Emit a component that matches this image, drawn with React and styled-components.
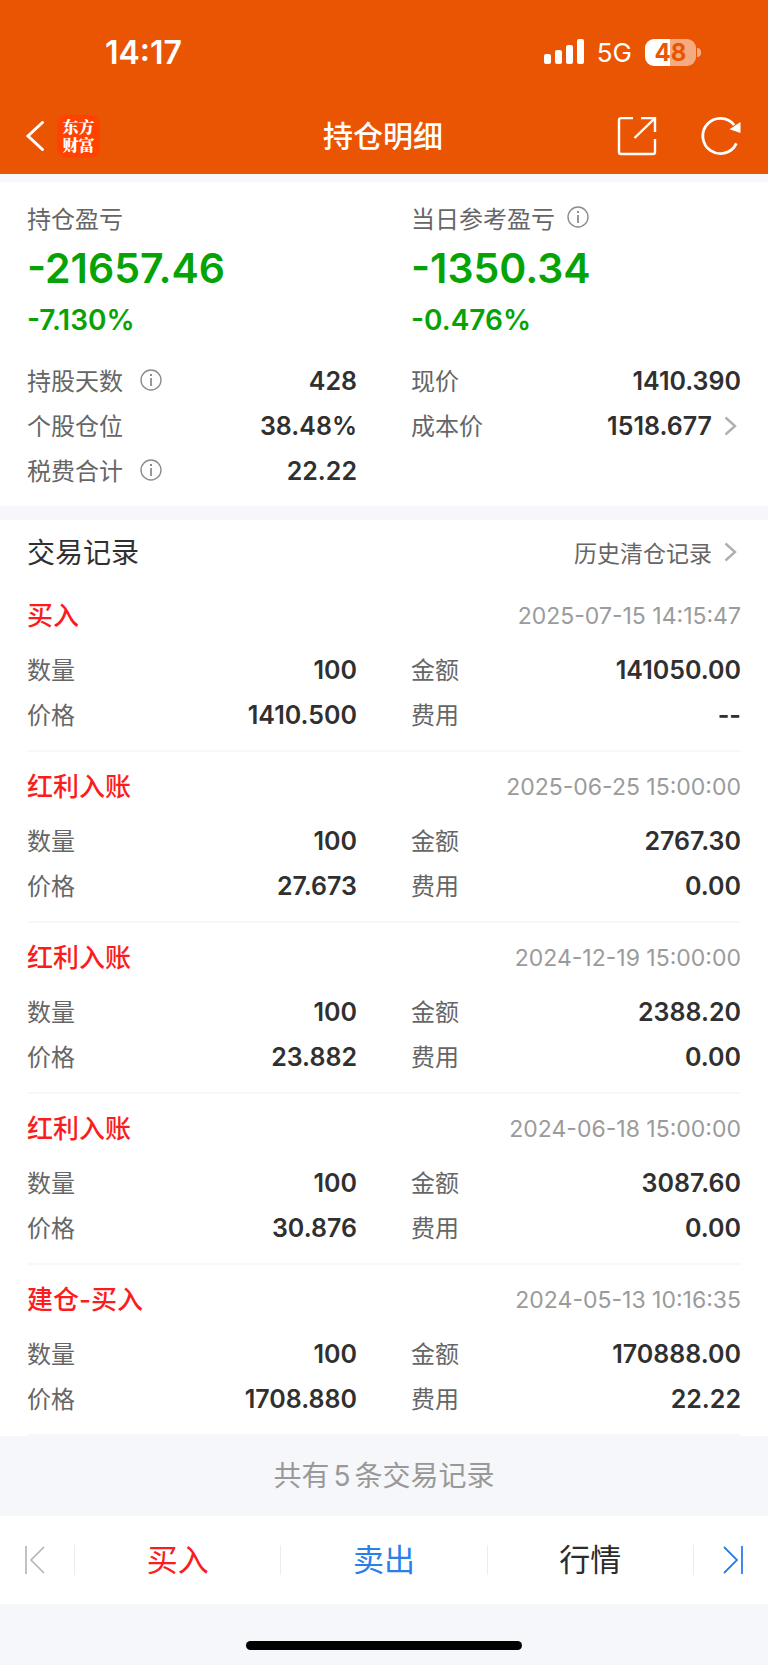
import React from 'react'
import styled, { createGlobalStyle } from 'styled-components'

const orange = '#ea5504'
const red = '#fb1d1d'
const green = '#05a305'
const blue = '#2b7fe8'
const page = '#f6f7fa'

const records = [
  {
    title: '买入',
    time: '2025-07-15 14:15:47',
    count: '100',
    amount: '141050.00',
    price: '1410.500',
    fee: '--',
  },
  {
    title: '红利入账',
    time: '2025-06-25 15:00:00',
    count: '100',
    amount: '2767.30',
    price: '27.673',
    fee: '0.00',
  },
  {
    title: '红利入账',
    time: '2024-12-19 15:00:00',
    count: '100',
    amount: '2388.20',
    price: '23.882',
    fee: '0.00',
  },
  {
    title: '红利入账',
    time: '2024-06-18 15:00:00',
    count: '100',
    amount: '3087.60',
    price: '30.876',
    fee: '0.00',
  },
  {
    title: '建仓-买入',
    time: '2024-05-13 10:16:35',
    count: '100',
    amount: '170888.00',
    price: '1708.880',
    fee: '22.22',
  },
]

const BackIcon = () => (
  <svg width="20" height="32" viewBox="0 0 20 32" fill="none">
    <path d="M17.5 2.5L3 16l14.5 13.5" stroke="#fff" strokeWidth="3" strokeLinecap="round" />
  </svg>
)

const ShareIcon = () => (
  <svg width="40" height="40" viewBox="0 0 40 40" fill="none" stroke="#fff" strokeWidth="2.4">
    <path d="M16 2.1H4a2 2 0 0 0-2 2V36a2 2 0 0 0 2 2h32a2 2 0 0 0 2-2V23" />
    <path d="M24 2.1h14v13.8M37.5 2.6L17.5 22" />
  </svg>
)

const RefreshIcon = () => (
  <svg width="40" height="40" viewBox="0 0 40 40" fill="none">
    <path d="M35.4 27.4A17.6 17.6 0 1 1 33.2 9" stroke="#fff" strokeWidth="2.8" />
    <path d="M28.5 13.2L39.5 6v11z" fill="#fff" />
  </svg>
)

const SignalIcon = () => (
  <svg width="40" height="26" viewBox="0 0 40 26" fill="#fff">
    <rect x="0" y="15" width="7" height="10" rx="2" />
    <rect x="11" y="11" width="7" height="14" rx="2" />
    <rect x="22" y="6" width="7" height="19" rx="2" />
    <rect x="33" y="0" width="7" height="25" rx="2" />
  </svg>
)

const InfoIcon = () => (
  <svg width="22" height="22" viewBox="0 0 22 22" fill="none" stroke="#8c8c8c">
    <circle cx="11" cy="11" r="10" strokeWidth="1.4" />
    <path d="M11 9v8" strokeWidth="1.8" />
    <path d="M11 5v2" strokeWidth="2" />
  </svg>
)

const ChevronIcon = () => (
  <svg width="14" height="20" viewBox="0 0 14 20" fill="none">
    <path d="M1.5 1.5L11 10l-9.5 8.5" stroke="#b0b0b0" strokeWidth="2.4" />
  </svg>
)

const FirstIcon = () => (
  <svg width="20" height="28" viewBox="0 0 20 28" fill="none" stroke="#b3b3b3" strokeWidth="1.6">
    <path d="M1 0v28M19 1L6 14l13 13" />
  </svg>
)

const LastIcon = () => (
  <svg width="20" height="28" viewBox="0 0 20 28" fill="none" stroke={blue} strokeWidth="1.8">
    <path d="M19 0v28M1 1l13 13L1 27" />
  </svg>
)

const Info = ({ label }) => (
  <IconButton type="button" aria-label={label}>
    <InfoIcon />
  </IconButton>
)

const Item = ({ label, value, info, link }) => (
  <Row>
    <Label $gap="17px">
      {label}
      {info && <Info label={`${label}说明`} />}
    </Label>
    {link ? (
      <ValueButton type="button">
        {value}
        <ChevronIcon />
      </ValueButton>
    ) : (
      <Value>{value}</Value>
    )}
  </Row>
)

const Record = ({ record }) => (
  <RecordItem>
    <RecordHead>
      <RecordTitle>{record.title}</RecordTitle>
      <Time>{record.time}</Time>
    </RecordHead>
    <Columns>
      <Item label="数量" value={record.count} />
      <Item label="金额" value={record.amount} />
      <Item label="价格" value={record.price} />
      <Item label="费用" value={record.fee} />
    </Columns>
  </RecordItem>
)

const App = () => (
  <Page>
    <GlobalStyle />
    <Header>
      <StatusBar>
        <Clock>14:17</Clock>
        <Status>
          <SignalIcon />
          <Network>5G</Network>
          <BatteryWrap>
            <Battery>48</Battery>
            <BatteryTip />
          </BatteryWrap>
        </Status>
      </StatusBar>
      <NavBar>
        <NavSide>
          <IconButton type="button" aria-label="返回">
            <BackIcon />
          </IconButton>
          <Logo>东方财富</Logo>
        </NavSide>
        <Title>持仓明细</Title>
        <NavSide $end>
          <IconButton type="button" aria-label="分享">
            <ShareIcon />
          </IconButton>
          <IconButton type="button" aria-label="刷新">
            <RefreshIcon />
          </IconButton>
        </NavSide>
      </NavBar>
    </Header>

    <Summary>
      <Columns>
        <div>
          <ProfitLabel $gap="12px">持仓盈亏</ProfitLabel>
          <Profit>-21657.46</Profit>
          <Percent>-7.130%</Percent>
        </div>
        <div>
          <ProfitLabel $gap="12px">
            当日参考盈亏
            <Info label="当日参考盈亏说明" />
          </ProfitLabel>
          <Profit>-1350.34</Profit>
          <Percent>-0.476%</Percent>
        </div>
      </Columns>
      <Details>
        <Item label="持股天数" value="428" info />
        <Item label="现价" value="1410.390" />
        <Item label="个股仓位" value="38.48%" />
        <Item label="成本价" value="1518.677" link />
        <Item label="税费合计" value="22.22" info />
      </Details>
    </Summary>

    <Records>
      <SectionHead>
        <SectionTitle>交易记录</SectionTitle>
        <HistoryLink href="#history">
          历史清仓记录
          <ChevronIcon />
        </HistoryLink>
      </SectionHead>
      <RecordList>
        {records.map(record => (
          <Record record={record} key={record.time} />
        ))}
      </RecordList>
    </Records>

    <Total>
      共有<TotalNumber>5</TotalNumber>条交易记录
    </Total>

    <ActionBar>
      <ActionSide type="button" aria-label="上一个">
        <FirstIcon />
      </ActionSide>
      <Action type="button" $color={red}>
        买入
      </Action>
      <Action type="button" $color={blue}>
        卖出
      </Action>
      <Action type="button" $color="#2b2b2b">
        行情
      </Action>
      <ActionSide type="button" aria-label="下一个" $last>
        <LastIcon />
      </ActionSide>
    </ActionBar>
    <HomeArea>
      <HomeIndicator />
    </HomeArea>
  </Page>
)

const GlobalStyle = createGlobalStyle`
  * {
    box-sizing: border-box;
  }
  body {
    margin: 0;
    background: ${page};
    font-family: Inter, 'Noto Sans CJK SC', sans-serif;
  }
  button {
    margin: 0;
    padding: 0;
    border: 0;
    background: none;
    font: inherit;
    cursor: pointer;
  }
  svg {
    display: block;
    flex: none;
  }
`

const Page = styled.main`
  display: flex;
  flex-direction: column;
  min-height: 100vh;
  background: ${page};
`

const Header = styled.header`
  background: ${orange};
  color: #fff;
`

const StatusBar = styled.div`
  display: flex;
  justify-content: space-between;
  align-items: center;
  height: 98px;
  padding: 6px 67px 0 105px;
`

const Clock = styled.div`
  font-size: 32px;
  font-weight: 600;
`

const Status = styled.div`
  display: flex;
  align-items: center;
  gap: 13px;
`

const Network = styled.span`
  font-size: 26px;
`

const BatteryWrap = styled.div`
  display: flex;
  align-items: center;
  gap: 1px;
`

const Battery = styled.div`
  width: 51px;
  border-radius: 9px;
  background: linear-gradient(90deg, #fff 49%, #f5ab82 49%);
  color: ${orange};
  font-size: 24px;
  font-weight: 700;
  line-height: 27px;
  text-align: center;
`

const BatteryTip = styled.div`
  width: 4px;
  height: 9px;
  border-radius: 0 4px 4px 0;
  background: #f5ab82;
`

const NavBar = styled.nav`
  display: grid;
  grid-template-columns: 1fr auto 1fr;
  align-items: center;
  height: 76px;
  padding: 0 27px 0 25px;
`

const NavSide = styled.div`
  display: flex;
  align-items: center;
  justify-content: ${props => (props.$end ? 'flex-end' : 'flex-start')};
  gap: ${props => (props.$end ? '44px' : '12px')};
`

const IconButton = styled.button`
  display: flex;
`

const Logo = styled.div`
  width: 43px;
  height: 43px;
  padding: 3px 5px;
  border-radius: 9px;
  background: #ff4200;
  font-family: 'Noto Serif CJK SC', 'Noto Sans CJK SC', serif;
  font-size: 16px;
  font-weight: 900;
  line-height: 18px;
  text-align: center;
`

const Title = styled.h1`
  margin: 0;
  padding-bottom: 4px;
  font-size: 30px;
  font-weight: 500;
`

const Summary = styled.section`
  margin: 8px 0 14px;
  padding: 16px 27px 13px;
  background: #fff;
`

const Columns = styled.div`
  display: grid;
  grid-template-columns: 1fr 1fr;
  column-gap: 54px;
`

const Details = styled(Columns)`
  margin-top: 16px;
`

const Label = styled.div`
  display: flex;
  align-items: center;
  gap: ${props => props.$gap};
  padding-bottom: 2px;
  color: #666;
  font-size: 24px;
`

const ProfitLabel = styled(Label)`
  height: 40px;
`

const Profit = styled.div`
  color: ${green};
  font-size: 41px;
  font-weight: 600;
  line-height: 60px;
`

const Percent = styled.div`
  color: ${green};
  font-size: 28px;
  font-weight: 600;
  line-height: 44px;
`

const Row = styled.div`
  display: flex;
  justify-content: space-between;
  align-items: center;
  height: 45px;
`

const Value = styled.div`
  color: #303030;
  font-size: 25px;
  font-weight: 600;
`

const ValueButton = styled.button`
  display: flex;
  align-items: center;
  gap: 12px;
  padding-right: 3px;
  color: #303030;
  && {
    font-size: 25px;
    font-weight: 600;
  }
`

const Records = styled.section`
  background: #fff;
`

const SectionHead = styled.div`
  display: flex;
  justify-content: space-between;
  align-items: center;
  height: 61px;
  padding: 3px 30px 0 27px;
`

const SectionTitle = styled.h2`
  margin: 0;
  padding-bottom: 2px;
  color: #303030;
  font-size: 28px;
  font-weight: 400;
`

const HistoryLink = styled.a`
  display: flex;
  align-items: center;
  gap: 12px;
  color: #666;
  font-size: 23px;
  text-decoration: none;
`

const RecordList = styled.ul`
  margin: 0;
  padding: 0 27px;
  list-style: none;
`

const RecordItem = styled.li`
  padding: 4px 0 13px;
  border-bottom: 2px solid #f8f8f9;
`

const RecordHead = styled.div`
  display: flex;
  justify-content: space-between;
  align-items: center;
  height: 62px;
`

const RecordTitle = styled.h3`
  margin: 0;
  padding-bottom: 5px;
  color: ${red};
  font-size: 26px;
  font-weight: 500;
`

const Time = styled.time`
  color: #9b9b9b;
  font-size: 23px;
`

const Total = styled.p`
  margin: 0;
  color: #999;
  font-size: 28px;
  line-height: 80px;
  text-align: center;
`

const TotalNumber = styled.span`
  margin: 0 4px;
`

const ActionBar = styled.div`
  display: flex;
  align-items: center;
  height: 88px;
  background: #fff;
`

const ActionSide = styled.button`
  display: flex;
  justify-content: ${props => (props.$last ? 'flex-end' : 'flex-start')};
  align-items: center;
  width: 74px;
  height: 30px;
  && {
    padding: 0 25px;
  }
`

const Action = styled.button`
  flex: 1;
  height: 30px;
  color: ${props => props.$color};
  && {
    border-left: 1px solid #ececec;
    font-size: 31px;
    line-height: 30px;
  }
  &&:nth-child(4) {
    border-right: 1px solid #ececec;
  }
`

const HomeArea = styled.div`
  display: flex;
  justify-content: center;
  padding: 37px 0 15px;
`

const HomeIndicator = styled.div`
  width: 36%;
  height: 9px;
  border-radius: 5px;
  background: #000;
`

export default App
